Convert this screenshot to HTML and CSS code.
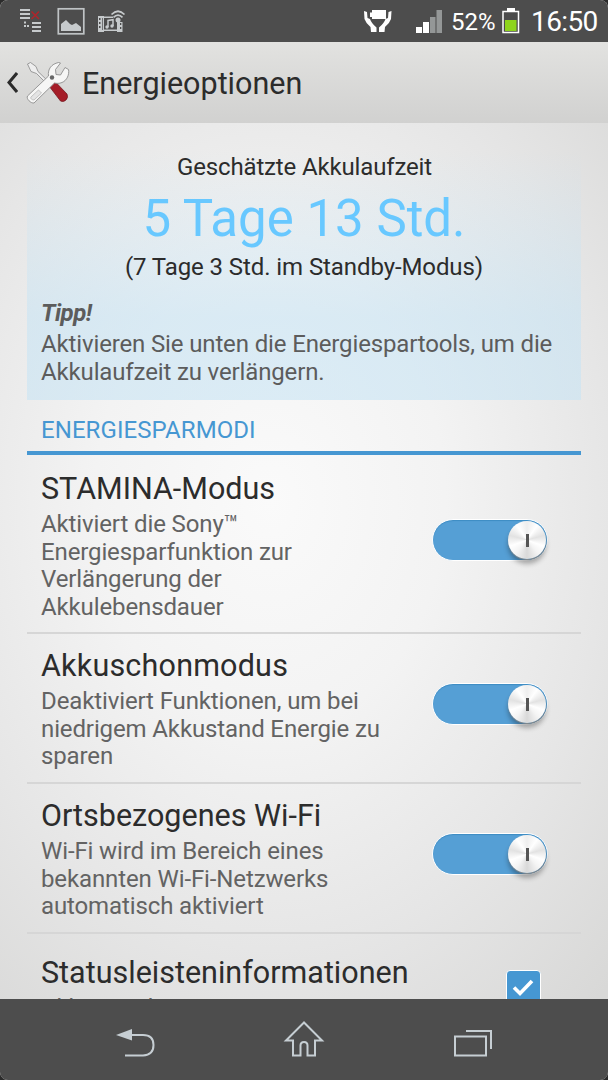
FILE: index.html
```html
<!DOCTYPE html>
<html lang="de">
<head>
    <meta charset="UTF-8">
    <meta name="viewport" content="width=device-width, initial-scale=1.0">
    <title>Energieoptionen</title>
    <link rel="stylesheet" href="styles.css">
</head>
<body>
<div class="screen">

    <div class="statusbar">
        <svg class="notifications" width="130" height="42" viewBox="0 0 130 42">
            <g fill="#c6cacc">
                <path d="M20 9h10v2h-10zM20 13h10v2h-10zM20 17h10v2h-10zM32 22h9v2h-9zM32 26h9v2h-9zM32 30h9v2h-9z"/>
                <path d="M24 21.500h2v2h-2zM24 25h2v2h-2zM27 25h2v2h-2z"/>
                <path d="M61 31v-7l5-4 4 4 2 1 4-2 5 4v4z"/>
                <path fill-rule="evenodd" d="M98 16h6v.5h9v1.500h-9v11.500h13v-7.500h5.500v10h-5.500v-1h-13v1h-6zM99 18v2h1.500v-2zM99 22v2h1.500v-2zM99 26v2h1.500v-2zM102 18v12h.7v-12zM120 23v2h1.300v-2zM120 27v2h1.300v-2z"/>
            </g>
            <path d="M31.500 11.500l7.500 7.500M39 11.500l-7.500 7.500" stroke="#b0242a" stroke-width="1.500"/>
            <rect x="58.300" y="8.800" width="25.500" height="25" fill="none" stroke="#bfc3c5" stroke-width="1.700"/>
            <g fill="none" stroke="#c6cacc">
                <path d="M108 27v-6.500l5-.8v6.300" stroke-width="1.500"/>
                <path d="M111.500 14.500q6.500-6.500 13 0M113.500 17.300q4.500-4.500 9 0" stroke-width="1.700"/>
            </g>
            <g fill="#c6cacc"><circle cx="107" cy="27" r="1.700"/><circle cx="112" cy="26" r="1.700"/><circle cx="118" cy="20" r="2.500"/></g>
        </svg>
        <svg class="stamina" width="30" height="42" viewBox="0 0 30 42">
            <g fill="#fff">
                <path d="M1 11l.5 8q1.500 4.500 6 8l.5 5h5.500v-4.500Q8.500 23.500 7 19l-2.500-1L4 12z"/>
                <path d="M28.500 11l-.5 8q-1.500 4.500-6 8l-.5 5H16v-4.500q5-4 6.500-8.500l2.500-1 .5-6z"/>
                <path d="M9 10h14v9H9v-2H7v-4.500h2z"/>
            </g>
        </svg>
        <svg class="signal" width="26" height="42" viewBox="0 0 26 42">
            <path d="M0 27h6v6H0zM7 22h6v11H7z" fill="#fff"/>
            <path d="M14 17h5.500v16H14zM20.500 10H26v23h-5.500z" fill="#949797"/>
        </svg>
        <span class="percent">52%</span>
        <svg class="battery" width="18" height="42" viewBox="0 0 18 42">
            <path d="M5 8h8v4H5z" fill="#fff"/>
            <rect x="1" y="11.500" width="15.500" height="21" fill="#4b4b4b" stroke="#fff" stroke-width="1.500"/>
            <path d="M3 20h11.500v11H3z" fill="#8ed41c"/>
        </svg>
        <span class="clock">16:50</span>
    </div>

    <div class="header">
        <svg class="back" width="12" height="24" viewBox="0 0 12 24"><path d="M11 2L3 11.500l8 9.500" fill="none" stroke="#2b2b2b" stroke-width="3"/></svg>
        <svg class="tools" width="44" height="44" viewBox="0 0 44 44">
            <path d="M23 25l6-4.500L41 33q1.500 3.500-1 6-2.500 2.500-5.500 1z" fill="#a51d28" stroke="#6f1019" stroke-width=".7"/>
            <path d="M1.500 3l3-1.500 5.500 4 2 5L26 24l-2 2L10.500 12.500 5 10.500z" fill="#eee" stroke="#888" stroke-width=".8"/>
            <path d="M1.500 35L22.500 15c-1-7 3-12 10-13.500l2 .5-5 6.500.5 5 4.500.5L39 6.500l3.500 2c1 5-1.500 11-6.500 13-3 1.200-5 1-7.500.5L8 42c-3 .5-8-4-6.500-7z" fill="#f6f6f5" stroke="#8d8d8d" stroke-width=".9"/>
            <path d="M5 36l7.500-7 3 3L8 39c-2 0-4-1.500-3-3z" fill="#e4e4e4" stroke="#b0b0b0" stroke-width=".7"/>
            <circle cx="26" cy="16.500" r="2.200" fill="#666"/>
        </svg>
        <h1>Energieoptionen</h1>
    </div>

    <div class="content">
        <div class="estimate">
            <p class="label">Geschätzte Akkulaufzeit</p>
            <p class="time">5 Tage 13 Std.</p>
            <p class="standby">(7 Tage 3 Std. im Standby-Modus)</p>
            <p class="tip-title">Tipp!</p>
            <p class="tip">Aktivieren Sie unten die Energiespartools, um die<br>Akkulaufzeit zu verlängern.</p>
        </div>

        <h2>ENERGIESPARMODI</h2>

        <div class="row first">
            <div class="text">
                <h3>STAMINA-Modus</h3>
                <p>Aktiviert die Sony™<br>Energiesparfunktion zur<br>Verlängerung der<br>Akkulebensdauer</p>
            </div>
            <div class="switch"><div class="knob"></div></div>
        </div>
        <div class="row">
            <div class="text">
                <h3 class="wide">Akkuschonmodus</h3>
                <p>Deaktiviert Funktionen, um bei<br>niedrigem Akkustand Energie zu<br>sparen</p>
            </div>
            <div class="switch"><div class="knob"></div></div>
        </div>
        <div class="row">
            <div class="text">
                <h3>Ortsbezogenes Wi-Fi</h3>
                <p>Wi-Fi wird im Bereich eines<br>bekannten Wi-Fi-Netzwerks<br>automatisch aktiviert</p>
            </div>
            <div class="switch"><div class="knob"></div></div>
        </div>
        <div class="row last">
            <div class="text">
                <h3>Statusleisteninformationen</h3>
                <p>Akkustand</p>
            </div>
            <div class="checkbox">
                <svg width="33" height="33" viewBox="0 0 33 33"><path d="M7 16.500l6 6L25 10" fill="none" stroke="#fff" stroke-width="3.600"/></svg>
            </div>
        </div>
    </div>

    <div class="navbar">
        <svg width="608" height="81" viewBox="0 0 608 81" fill="none" stroke="#c6ced3" stroke-width="2">
            <path d="M131 36h12q10.500 0 10.500 10t-10.500 10.500h-18"/>
            <path d="M116 36l16-6v11.500z" fill="#c6ced3" stroke="none"/>
            <path d="M304 23.500l-18 18h7v15h7.500v-10q0-3.500 3.500-3.500t3.500 3.500v10h7.500v-15h7z"/>
            <path d="M455 37.500h31v19h-31zM466 32h25v18"/>
        </svg>
    </div>

</div>
</body>
</html>
```

FILE: styles.css
```css
* { box-sizing: border-box; }
body {
    margin: 0;
    background: #2b2b2b;
    font-family: Roboto, "Liberation Sans", sans-serif;
    color: #2c2c2c;
}
h1, h2, h3, p { margin: 0; font-weight: 400; white-space: nowrap; }
svg { display: block; flex: none; }

.screen {
    display: flex;
    flex-direction: column;
    width: 608px;
    height: 1080px;
    overflow: hidden;
    border-radius: 8px;
    background: radial-gradient(ellipse 500px 660px at 270px 500px, #fafafa 0%, #f3f3f3 35%, #e6e6e6 68%, #d8d8d7 100%);
}

.statusbar {
    display: flex;
    align-items: center;
    flex: none;
    height: 42px;
    background: #4d4d4d;
    color: #fff;
}
.stamina { margin-left: 233px; }
.signal { margin-left: 23px; }
.percent { width: 44px; margin-left: 9px; padding-top: 1px; font-size: 24px; }
.battery { margin-left: 7px; }
.clock { margin-left: 11px; padding-top: 1px; font-size: 28px; letter-spacing: -.6px; }

.header {
    display: flex;
    align-items: center;
    flex: none;
    height: 81px;
    padding-left: 6px;
    background: linear-gradient(#e2e2e0, #d1d1d0);
}
.tools { margin-left: 8px; }
.header h1 { margin-left: 12px; padding-top: 2px; font-size: 30.5px; }

.content {
    flex: 1;
    min-height: 0;
    overflow: hidden;
    padding: 0 27px;
}
.estimate {
    height: 277px;
    padding: 27px 14px 0;
    text-align: center;
    background: linear-gradient(rgba(200, 228, 244, 0) 10%, rgba(200, 228, 244, .4) 50%, rgba(200, 228, 244, .6) 70%);
}
.estimate .label { padding-left: 1px; font-size: 24px; line-height: 34px; letter-spacing: -.15px; }
.estimate .time { padding-top: 1px; font-size: 51px; line-height: 67px; color: #68c8ff; }
.estimate .standby { font-size: 24px; line-height: 30px; letter-spacing: -.09px; }
.estimate .tip-title { margin-top: 17px; font-size: 24px; line-height: 29px; font-weight: 700; font-style: italic; text-align: left; letter-spacing: -.5px; color: #5c5c5c; }
.estimate .tip { margin-top: 3px; font-size: 24px; line-height: 27.5px; text-align: left; letter-spacing: -.14px; color: #5c5c5c; }

h2 {
    height: 55px;
    padding: 16px 14px 0;
    border-bottom: 4px solid #4697d2;
    font-size: 24px;
    line-height: 28px;
    letter-spacing: .07px;
    color: #4697d2;
}

.row {
    display: flex;
    justify-content: space-between;
    align-items: center;
    height: 150px;
    padding: 14px 33px 11px 14px;
    border-bottom: 2px solid #d6d6d6;
}
.row.first { height: 179px; padding-top: 16px; }
.row h3 { font-size: 30.5px; line-height: 36px; }
.row h3.wide { letter-spacing: .2px; }
.row p { margin-top: 4px; font-size: 24px; line-height: 27.5px; letter-spacing: -.12px; color: #636363; }
.row.last { align-items: flex-start; padding-top: 21px; padding-right: 40px; border: 0; }

.switch {
    position: relative;
    flex: none;
    width: 116px;
    height: 42px;
    margin-bottom: 12px;
    border: 1px solid #fff;
    border-radius: 21px;
    background: #559fd5;
    box-shadow: inset 0 1px 1px #3e8cc4;
}
.knob {
    position: absolute;
    top: 1px;
    right: 1px;
    width: 38px;
    height: 38px;
    border-radius: 50%;
    background: conic-gradient(#eee, #fff 35deg, #e2e2e2 75deg, #fff 110deg, #f4f4f4 140deg, #d9d9d9 180deg, #f4f4f4 220deg, #fff 250deg, #e2e2e2 285deg, #fff 325deg, #eee);
    box-shadow: 0 1px 1px #8d8d8d, 0 5px 5px rgba(0, 0, 0, .3);
}
.knob::after {
    content: "";
    position: absolute;
    left: 18px;
    top: 13px;
    width: 3px;
    height: 13px;
    background: #555;
}
.checkbox {
    width: 35px;
    height: 35px;
    margin-top: 15px;
    border: 1px solid #fff;
    border-radius: 4px;
    background: #4697d2;
}

.navbar { flex: none; height: 81px; background: #4d4d4d; }
```
